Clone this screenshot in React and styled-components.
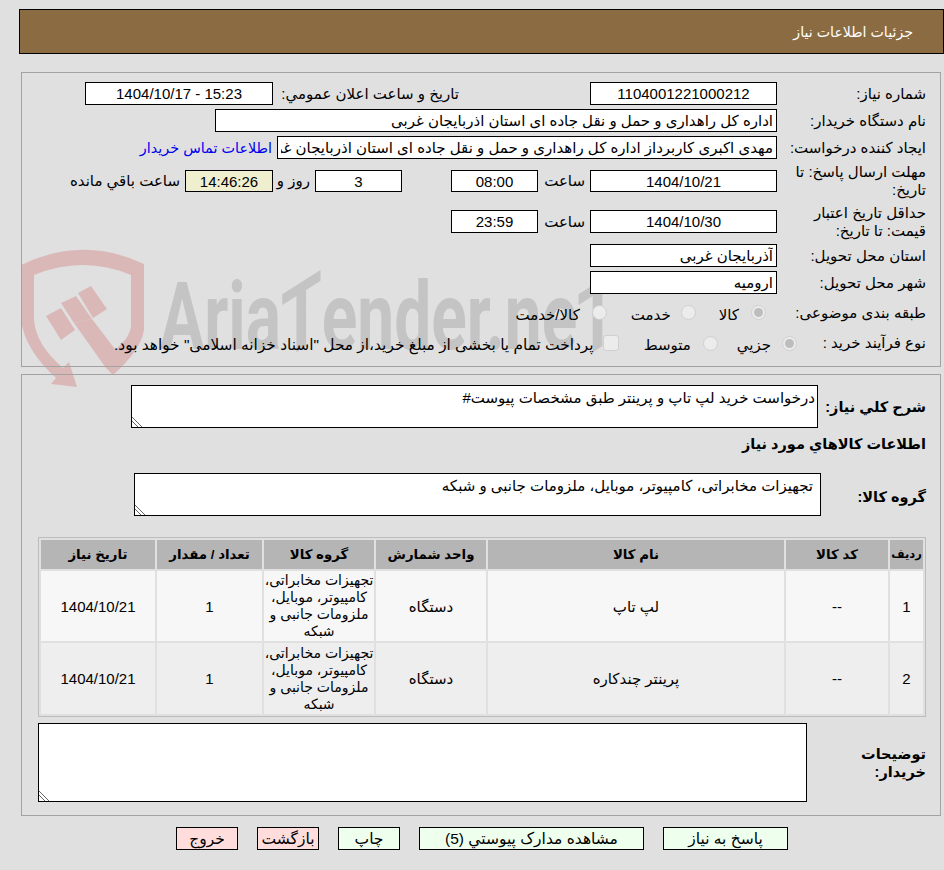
import React from "react";
import styled, { createGlobalStyle } from "styled-components";

const Global = createGlobalStyle`
  html, body { margin: 0; padding: 0; background: #e0e0e0; overflow: hidden; }
  body { font-family: "Liberation Sans", "DejaVu Sans", sans-serif; font-size: 15px; color: #000; }
`;
const Page = styled.div`
  position: relative; width: 944px; height: 870px; direction: rtl; overflow: hidden; box-sizing: border-box; padding-top: 9px;
`;
const Watermark = styled.div`position: absolute; left: 0; top: 0; z-index: 0;`;
const Shield = styled.svg`position: absolute; left: 15px; top: 245px;`;
const MarkText = styled.div`
  position: absolute; left: 160px; top: 262px; direction: ltr; white-space: nowrap; font-family: Roboto, sans-serif;
  font-weight: 700; font-size: 94px; line-height: 110px; color: #c4c4c4; transform: scaleX(0.7); transform-origin: left top;
`;
const SlantT = styled.span`display: inline-block; transform: skewY(-24deg);`;
const Content = styled.div`position: relative; z-index: 1;`;
const Header = styled.div`
  box-sizing: border-box; height: 45px; width: 925px; margin-left: 19px; background: #8b6c42; border: 1px solid #000;
  color: #fff; font-size: 14.2px; display: flex; align-items: center; padding-right: 30px;
`;
const Panel = styled.div`
  box-sizing: border-box; width: 920px; margin: ${p => p.$top}px 3px 0 21px; border: 1px solid #a2a2a2; display: flex; flex-direction: column;
`;
const InfoPanel = styled(Panel)`height: 295px; padding-top: 9px; gap: 4px;`;
const DetailPanel = styled(Panel)`height: 442px; padding: 10px 14px 0 16px;`;
const Row = styled.div`display: flex; align-items: center; height: ${p => p.$h || 23}px; flex: none;`;
const FieldLabel = styled.div`
  box-sizing: border-box; width: ${p => p.$w || 163}px; flex: none; padding-right: 14px; line-height: 18px;
`;
const Field = styled.input`
  box-sizing: border-box; flex: none; width: ${p => p.$w}px; height: ${p => p.$h || 23}px; margin: 0 ${p => p.$gap || 0}px 0 0; border: 1px solid #000; border-radius: 0;
  padding: 0 3px; font: inherit; color: #000; outline: none; text-align: ${p => p.$align || "center"}; background: ${p => p.$bg || "#fff"}; direction: rtl;
`;
const SideLabel = styled.div`
  box-sizing: border-box; flex: none; width: ${p => p.$w}px; margin-right: ${p => p.$gap || 0}px; padding-right: ${p => p.$pad ?? 5}px; white-space: nowrap;
`;
const ContactLink = styled.a`margin-right: 5px; color: #0000ee; font-size: 14.4px; text-decoration: none; white-space: nowrap;`;
const Radio = styled.span`
  flex: none; box-sizing: border-box; width: 15px; height: 15px; border-radius: 50%; border: 1px solid #cfcfcf; background: #ececec; margin-right: ${p => p.$gap}px; display: flex; align-items: center; justify-content: center;
  &::after { content: ""; display: ${p => p.$on ? "block" : "none"}; width: 9px; height: 9px; border-radius: 50%; background: #bdbdbd; }
`;
const Check = styled.span`
  flex: none; box-sizing: border-box; width: 16px; height: 16px; border-radius: 3px; border: 1px solid #cfcfcf; background: #ececec; margin-right: ${p => p.$gap}px;
`;
const Choice = styled.span`flex: none; margin-right: ${p => p.$gap}px; font-size: ${p => p.$size || 15}px; white-space: nowrap; position: relative; top: 2px;`;
const Boxed = styled.textarea`
  box-sizing: border-box; flex: none; display: block; width: ${p => p.$w}px; height: ${p => p.$h}px; margin: 0; border: 1px solid #000; border-radius: 0; background: #fff;
  padding: 3px ${p => p.$pad || 2}px 0 6px; font: inherit; color: #000; outline: none; resize: both; direction: rtl; text-align: right; overflow: hidden;
  &::-webkit-resizer {
    background: linear-gradient(45deg, transparent 0 3.6px, #666 3.6px 4.8px, transparent 4.8px 6.4px, #666 6.4px 7.6px, transparent 7.6px);
  }
`;
const DetailRow = styled.div`display: flex; align-items: center; margin-top: ${p => p.$top || 0}px;`;
const BoldLabel = styled.div`flex: none; width: ${p => p.$w}px; font-weight: 700; font-size: 14.5px; line-height: 18px; padding-top: ${p => p.$down || 0}px; box-sizing: border-box;`;
const SectionTitle = styled.div`font-weight: 700; font-size: 14.5px; line-height: 18px; margin-top: 7px;`;
const Table = styled.table`
  table-layout: fixed; width: 888px; margin-top: 21px; flex: none; border: 1px solid #bcbcbc; border-collapse: separate; border-spacing: 2px; direction: rtl;
  font-size: 15px; line-height: 17px;
`;
const Th = styled.th`
  width: ${p => p.$w}px; height: 29px; box-sizing: border-box; background: #b5b5b5; padding: 0; font-size: ${p => p.$size || 13.33}px; font-weight: 700; color: #000; overflow: hidden; white-space: nowrap;
`;
const Td = styled.td`
  background: ${p => p.$bg}; padding: 0; text-align: center; box-sizing: border-box; height: ${p => p.$h}px; color: #000;
`;
const GroupLine = styled.span`display: block; white-space: nowrap; font-size: 14px;`;
const Actions = styled.div`display: flex; gap: 19px; margin-top: 11px; padding-right: 156px;`;
const Action = styled.button`
  box-sizing: border-box; flex: none; width: ${p => p.$w}px; height: 23px; padding: 0; border: 1px solid #000; border-radius: 0; background: ${p => p.$danger ? "#ffdddd" : "#eeffee"};
  font: inherit; font-size: 15.5px; color: #000;
`;

const columns = [["ردیف", 33, 11.5], ["کد کالا", 102], ["نام کالا", 296], ["واحد شمارش", 110], ["گروه کالا", 110], ["تعداد / مقدار", 105], ["تاریخ نیاز", 114]];
const groupLines = ["تجهیزات مخابراتی،", "کامپیوتر، موبایل،", "ملزومات جانبی و", "شبکه"];
const rows = [
  { n: "1", name: "لپ تاپ", bg: "#f7f7f7", h: 70 },
  { n: "2", name: "پرینتر چندکاره", bg: "#eeeeee", h: 71 },
];

export default function App() {
  return (
    <Page>
      <Global />
      <Watermark>
        <Shield width="150" height="200" viewBox="15 245 150 200" fill="#dbb8b8">
          <path d="M21,265 Q83,235 144,264 L144,330 Q141,350 113,375 L104,362 L125,340 Q131,332 131,325 L131,275 Q83,255 34,275 L34,320 Q36,345 63,368 L69,362 L77,387 L51,384 L56,378 Q25,350 21,320 Z" />
          <path d="M74,323 L92,319 L121,357 L113,375 L106,368 Z" />
          <path d="M61,303 L76,296 L92,319 L74,323 Z" />
          <path d="M78,293 L91,286 L107,309 L93,318 Z" />
          <path d="M46,316 L61,308 L75,330 L61,340 Z" />
        </Shield>
        <MarkText>Aria<SlantT>T</SlantT>ender.ne<SlantT>T</SlantT></MarkText>
      </Watermark>
      <Content>
        <Header>جزئیات اطلاعات نیاز</Header>
        <InfoPanel $top={18}>
          <Row>
            <FieldLabel>شماره نیاز:</FieldLabel>
            <Field $w={187} readOnly value="1104001221000212" />
            <SideLabel $w={186} $gap={131} $pad={0}>تاریخ و ساعت اعلان عمومي:</SideLabel>
            <Field $w={188} readOnly value="15:23 - 1404/10/17" />
          </Row>
          <Row>
            <FieldLabel>نام دستگاه خریدار:</FieldLabel>
            <Field $w={562} $align="right" readOnly value="اداره کل راهداری و حمل و نقل جاده ای استان اذربایجان غربی" />
          </Row>
          <Row>
            <FieldLabel>ایجاد کننده درخواست:</FieldLabel>
            <Field $w={500} $align="right" readOnly value="مهدی اکبری کاربرداز اداره کل راهداری و حمل و نقل جاده ای استان اذربایجان غربی" />
            <ContactLink href="#">اطلاعات تماس خریدار</ContactLink>
          </Row>
          <Row $h={36}>
            <FieldLabel>مهلت ارسال پاسخ: تا تاریخ:</FieldLabel>
            <Field $w={187} $h={22} readOnly value="1404/10/21" />
            <SideLabel $w={52}>ساعت</SideLabel>
            <Field $w={87} $h={22} readOnly value="08:00" />
            <Field $w={87} $h={22} $gap={49} readOnly value="3" />
            <SideLabel $w={42}>روز و</SideLabel>
            <Field $w={88} $h={22} $bg="#efefcf" readOnly value="14:46:26" />
            <SideLabel $w={120}>ساعت باقي مانده</SideLabel>
          </Row>
          <Row $h={37}>
            <FieldLabel>حداقل تاریخ اعتبار قیمت: تا تاریخ:</FieldLabel>
            <Field $w={187} readOnly value="1404/10/30" />
            <SideLabel $w={52}>ساعت</SideLabel>
            <Field $w={87} readOnly value="23:59" />
          </Row>
          <Row>
            <FieldLabel>استان محل تحویل:</FieldLabel>
            <Field $w={187} $align="right" readOnly value="آذربایجان غربی" />
          </Row>
          <Row>
            <FieldLabel>شهر محل تحویل:</FieldLabel>
            <Field $w={187} $align="right" readOnly value="ارومیه" />
          </Row>
          <Row $h={29}>
            <FieldLabel>طبقه بندی موضوعی:</FieldLabel>
            <Radio $gap={11} $on />
            <Choice $gap={12}>كالا</Choice>
            <Radio $gap={23} />
            <Choice $gap={10}>خدمت</Choice>
            <Radio $gap={24} />
            <Choice $gap={12}>كالا/خدمت</Choice>
          </Row>
          <Row $h={24}>
            <FieldLabel $w={143}>نوع فرآیند خرید :</FieldLabel>
            <Radio $gap={0} $on />
            <Choice $gap={11}>جزيي</Choice>
            <Radio $gap={19} />
            <Choice $gap={12}>متوسط</Choice>
            <Check $gap={25} />
            <Choice $gap={9} $size={15.4}>پرداخت تمام یا بخشی از مبلغ خرید،از محل "اسناد خزانه اسلامی" خواهد بود.</Choice>
          </Row>
        </InfoPanel>
        <DetailPanel $top={7}>
          <DetailRow>
            <BoldLabel $w={108}>شرح كلي نياز:</BoldLabel>
            <Boxed $w={687} $h={43} readOnly value="درخواست خرید لپ تاپ و پرینتر طبق مشخصات پیوست#" />
          </DetailRow>
          <SectionTitle>اطلاعات كالاهاي مورد نياز</SectionTitle>
          <DetailRow $top={20}>
            <BoldLabel $w={105} $down={4}>گروه كالا:</BoldLabel>
            <Boxed $w={687} $h={43} $pad={7} readOnly value="تجهیزات مخابراتی، کامپیوتر، موبایل، ملزومات جانبی و شبکه" />
          </DetailRow>
          <Table>
            <thead>
              <tr>{columns.map(([t, w, s]) => <Th key={t} $w={w} $size={s}>{t}</Th>)}</tr>
            </thead>
            <tbody>
              {rows.map(r => (
                <tr key={r.n}>
                  <Td $bg={r.bg} $h={r.h}>{r.n}</Td>
                  <Td $bg={r.bg} $h={r.h}>--</Td>
                  <Td $bg={r.bg} $h={r.h}>{r.name}</Td>
                  <Td $bg={r.bg} $h={r.h}>دستگاه</Td>
                  <Td $bg={r.bg} $h={r.h}>{groupLines.map(l => <GroupLine key={l}>{l}</GroupLine>)}</Td>
                  <Td $bg={r.bg} $h={r.h}>1</Td>
                  <Td $bg={r.bg} $h={r.h}>1404/10/21</Td>
                </tr>
              ))}
            </tbody>
          </Table>
          <DetailRow $top={6}>
            <BoldLabel $w={119}>توضیحات خریدار:</BoldLabel>
            <Boxed $w={769} $h={79} readOnly value="" />
          </DetailRow>
        </DetailPanel>
        <Actions>
          <Action $w={125}>پاسخ به نیاز</Action>
          <Action $w={225}>مشاهده مدارک پیوستي (5)</Action>
          <Action $w={62}>چاپ</Action>
          <Action $w={62} $danger>بازگشت</Action>
          <Action $w={62} $danger>خروج</Action>
        </Actions>
      </Content>
    </Page>
  );
}
